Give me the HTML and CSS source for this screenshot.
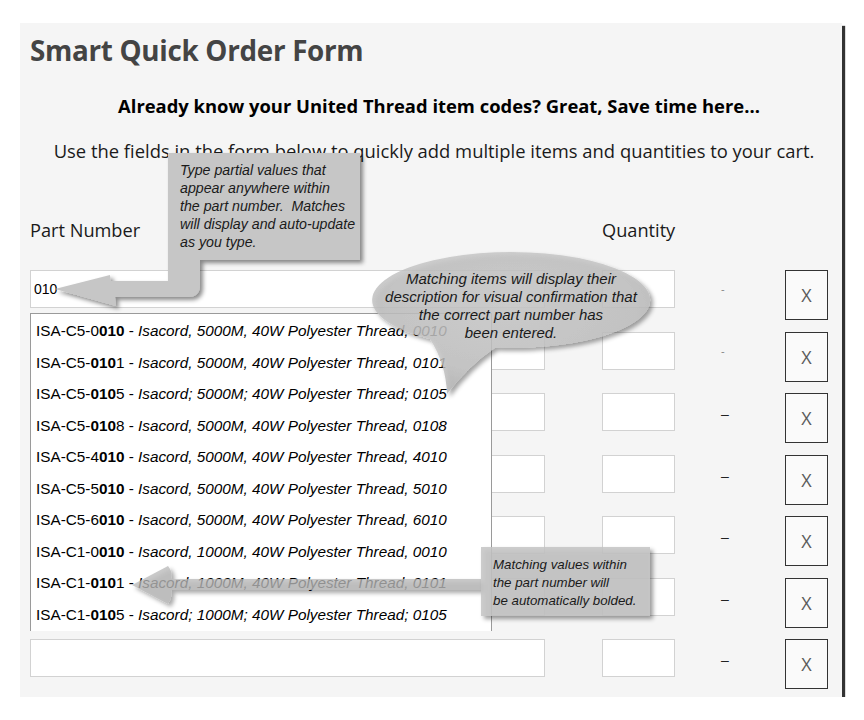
FILE: index.html
```html
<!DOCTYPE html>
<html lang="en">
<head>
<meta charset="utf-8">
<title>Smart Quick Order Form</title>
<link rel="stylesheet" href="styles.css">
</head>
<body>
<div class="panel">
  <h1 class="title">Smart Quick Order Form</h1>
  <h2 class="lead">Already know your United Thread item codes? Great, Save time here...</h2>
  <p class="intro">Use the fields in the form below to quickly add multiple items and quantities to your cart.</p>

  <div class="grid head">
    <div class="label">Part Number</div>
    <div class="label">Quantity</div>
  </div>

  <div class="rows">
    <div class="grid row">
      <input class="part" type="text" value="010">
      <input class="qty" type="text">
      <span class="dash small">-</span>
      <button class="remove" type="button">X</button>
    </div>
    <div class="grid row">
      <input class="part" type="text">
      <input class="qty" type="text">
      <span class="dash small">-</span>
      <button class="remove" type="button">X</button>
    </div>
    <div class="grid row">
      <input class="part" type="text">
      <input class="qty" type="text">
      <span class="dash">–</span>
      <button class="remove" type="button">X</button>
    </div>
    <div class="grid row">
      <input class="part" type="text">
      <input class="qty" type="text">
      <span class="dash">–</span>
      <button class="remove" type="button">X</button>
    </div>
    <div class="grid row">
      <input class="part" type="text">
      <input class="qty" type="text">
      <span class="dash">–</span>
      <button class="remove" type="button">X</button>
    </div>
    <div class="grid row">
      <input class="part" type="text">
      <input class="qty" type="text">
      <span class="dash">–</span>
      <button class="remove" type="button">X</button>
    </div>
    <div class="grid row">
      <input class="part" type="text">
      <input class="qty" type="text">
      <span class="dash">–</span>
      <button class="remove" type="button">X</button>
    </div>
  </div>

  <ul class="suggest">
    <li>ISA-C5-0<b>010</b> - <i>Isacord, 5000M, 40W Polyester Thread, 0010</i></li>
    <li>ISA-C5-<b>010</b>1 - <i>Isacord, 5000M, 40W Polyester Thread, 0101</i></li>
    <li>ISA-C5-<b>010</b>5 - <i>Isacord; 5000M; 40W Polyester Thread; 0105</i></li>
    <li>ISA-C5-<b>010</b>8 - <i>Isacord, 5000M, 40W Polyester Thread, 0108</i></li>
    <li>ISA-C5-4<b>010</b> - <i>Isacord, 5000M, 40W Polyester Thread, 4010</i></li>
    <li>ISA-C5-5<b>010</b> - <i>Isacord, 5000M, 40W Polyester Thread, 5010</i></li>
    <li>ISA-C5-6<b>010</b> - <i>Isacord, 5000M, 40W Polyester Thread, 6010</i></li>
    <li>ISA-C1-0<b>010</b> - <i>Isacord, 1000M, 40W Polyester Thread, 0010</i></li>
    <li>ISA-C1-<b>010</b>1 - <i>Isacord, 1000M, 40W Polyester Thread, 0101</i></li>
    <li>ISA-C1-<b>010</b>5 - <i>Isacord; 1000M; 40W Polyester Thread; 0105</i></li>
  </ul>

  <div class="overlay">
    <svg class="shapes" width="864" height="720" viewBox="0 0 864 720" xmlns="http://www.w3.org/2000/svg">
      <defs>
        <filter id="sh" x="-10%" y="-10%" width="130%" height="140%">
          <feDropShadow dx="3" dy="3" stdDeviation="2" flood-color="#000" flood-opacity="0.45"/>
        </filter>
        <radialGradient id="bub" cx="0.5" cy="0.4" r="0.6">
          <stop offset="0" stop-color="#cbcbcb"/>
          <stop offset="0.75" stop-color="#c2c2c2"/>
          <stop offset="1" stop-color="#b4b4b4"/>
        </radialGradient>
      </defs>
      <path filter="url(#sh)" fill="#c6c6c6"
        d="M168,153 H360 V260 H200 V285 Q200,297 188,297 H115 L116,306 L55,289 L110,275 L111,281 H168 Z"/>
      <path filter="url(#sh)" fill="url(#bub)" fill-opacity="0.8"
        d="M430,339 A139,48 0 1 1 495,347.7 Q468,366 447,394 Q446,364 430,339 Z"/>
      <path filter="url(#sh)" fill="#b8b8b8" fill-opacity="0.75"
        d="M481,579 H171 Q173,572 168,566 L132,585 L168,604 Q173,597 171,590 H481 Z"/>
      <rect filter="url(#sh)" x="481" y="547" width="169" height="69" fill="#c4c4c4" fill-opacity="0.85"/>
    </svg>
    <div class="note note-type">Type partial values that<br>appear anywhere within<br>the part number.&nbsp; Matches<br>will display and auto-update<br>as you type.</div>
    <div class="note note-match">Matching items will display their<br>description for visual confirmation that<br>the correct part number has<br>been entered.</div>
    <div class="note note-bold">Matching values within<br>the part number will<br>be automatically bolded.</div>
  </div>
</div>
</body>
</html>
```

FILE: styles.css
```css
html, body {
  margin: 0;
  padding: 0;
  background: #ffffff;
}

body {
  font-family: "Open Sans", "Noto Sans", sans-serif;
  color: #111;
}

.panel {
  position: relative;
  box-sizing: border-box;
  width: 822px;
  height: 674px;
  margin: 23px 0 0 20px;
  padding: 9px 10px 0 10px;
  background: #f5f5f5;
  box-shadow: 3px 3px 1px rgba(0, 0, 0, 0.8);
}

.title {
  margin: 0;
  font-family: "Open Sans", sans-serif;
  font-weight: 700;
  font-size: 27.8px;
  line-height: 36px;
  color: #444;
  letter-spacing: -0.3px;
}

.lead {
  margin: 26px 0 0 0;
  padding-left: 16px;
  font-family: "Open Sans", sans-serif;
  font-weight: 700;
  font-size: 18.4px;
  line-height: 24px;
  text-align: center;
  color: #000;
}

.intro {
  margin: 21px 0 0 0;
  padding-left: 6px;
  font-family: "Open Sans", sans-serif;
  font-size: 18.4px;
  line-height: 24px;
  text-align: center;
  color: #1a1a1a;
}

.grid {
  display: grid;
  grid-template-columns: 572px 73px 110px 43px;
}

.head {
  margin-top: 55px;
}

.label {
  font-family: "Open Sans", sans-serif;
  font-size: 18.2px;
  line-height: 24px;
  color: #1a1a1a;
}

.rows {
  margin-top: 28px;
  display: flex;
  flex-direction: column;
  gap: 11.5px;
}

.row {
  height: 50px;
  align-items: start;
}

.part, .qty {
  box-sizing: border-box;
  height: 38px;
  margin: 0;
  padding: 0 3px;
  border: 1px solid #d2d2d2;
  background: #fff;
  font-family: "Liberation Sans", Arial, sans-serif;
  font-size: 14px;
  color: #000;
  outline: none;
}

.part {
  width: 515px;
}

.qty {
  width: 73px;
}

.dash {
  padding-left: 46px;
  line-height: 42px;
  font-family: "Liberation Sans", Arial, sans-serif;
  font-size: 14px;
  color: #222;
}

.dash.small {
  line-height: 38px;
  color: #888;
  font-size: 11px;
}

.remove {
  box-sizing: border-box;
  width: 43px;
  height: 50px;
  margin: 0;
  padding: 0;
  border: 1px solid #333;
  background: #fafafa;
  font-family: "Open Sans", sans-serif;
  font-weight: 400;
  font-size: 18px;
  color: #5a5a5a;
}

.suggest {
  position: absolute;
  left: 10px;
  top: 290px;
  box-sizing: border-box;
  width: 462px;
  height: 318px;
  margin: 0;
  padding: 1px 0 0 0;
  list-style: none;
  background: #fff;
  border: 1px solid #9a9a9a;
  border-bottom: none;
  font-family: "Liberation Sans", Arial, sans-serif;
  font-size: 15.3px;
  color: #000;
}

.suggest li {
  height: 31.55px;
  line-height: 31.55px;
  padding-left: 5px;
  white-space: nowrap;
}

.suggest b {
  font-weight: 700;
}

.overlay {
  position: absolute;
  left: -20px;
  top: -23px;
  width: 864px;
  height: 720px;
  pointer-events: none;
}

.shapes {
  position: absolute;
  left: 0;
  top: 0;
}

.note {
  position: absolute;
  font-family: "Liberation Sans", Arial, sans-serif;
  font-style: italic;
  color: #1a1a1a;
  white-space: nowrap;
}

.note-type {
  left: 180px;
  top: 161px;
  font-size: 14.2px;
  line-height: 18px;
}

.note-match {
  left: 371px;
  top: 270px;
  width: 280px;
  text-align: center;
  font-size: 15px;
  line-height: 18px;
}

.note-bold {
  left: 493px;
  top: 556px;
  font-size: 13.3px;
  line-height: 18px;
}
```
